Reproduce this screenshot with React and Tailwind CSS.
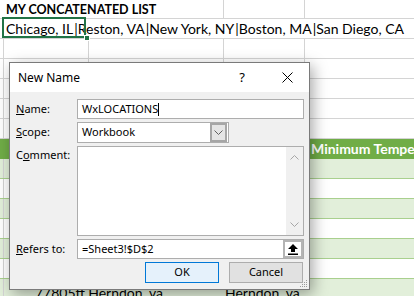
export default function App() {
  const g = "border-[#d4d4d4]";
  const dataRows = [0, 1, 2, 3, 4, 5, 6];
  const P = () => <span className="ml-[1px]">|</span>;
  return (
    <div className="relative w-[414px] h-[296px] overflow-hidden bg-white font-['Lato',sans-serif] text-black">
      {/* Row 1 */}
      <div className={`flex h-[19px] border-b ${g}`}>
        <div className={`w-[224px] shrink-0 border-r ${g} pl-[6px] font-bold text-[12.5px] leading-[19px] whitespace-nowrap`}>
          MY CONCATENATED LIST
        </div>
        <div className={`w-[81px] shrink-0 border-r ${g}`} />
        <div className="flex-1" />
      </div>
      {/* Row 2 */}
      <div className={`relative h-[20px] border-b ${g} pl-[6px] whitespace-nowrap text-[14px] leading-[20px]`}>
        Chicago, IL<P />Reston, VA<P />New York, NY<P />Boston, MA<P />San Diego, CA
        <div className="absolute left-[2px] top-[-2px] w-[84px] h-[21px] border-2 border-[#217346]" />
        <div className="absolute left-[84px] top-[16px] w-[6px] h-[6px] bg-[#217346] border border-white" />
      </div>
      {/* Rows 3-7 */}
      {[0, 1, 2, 3, 4].map((i) => (
        <div key={i} className={`flex h-[20px] border-b ${g}`}>
          <div className={`w-[4px] shrink-0 border-r ${g}`} />
          <div className={`w-[85px] shrink-0 border-r ${g}`} />
          <div className={`w-[135px] shrink-0 border-r ${g}`} />
          <div className={`w-[81px] shrink-0 border-r ${g}`} />
          <div className="flex-1" />
        </div>
      ))}
      {/* Table header */}
      <div className="flex h-[20px] bg-[#70ad47] overflow-hidden">
        <div className="w-[308px] shrink-0" />
        <div className="shrink-0 pl-[3px] text-white font-bold text-[14px] leading-[20px] whitespace-nowrap">
          Minimum Temperature
        </div>
      </div>
      {/* Table rows */}
      {dataRows.map((i) => (
        <div
          key={i}
          className={`flex h-[20px] border-b border-[#a9d08e] ${i % 2 === 0 ? "bg-[#e2efda]" : "bg-white"}`}
        >
          <div className={`w-[4px] shrink-0 border-r ${g}`} />
          {i === 6 ? (
            <div className="flex text-[14px] leading-[27px] whitespace-nowrap">
              <span className="shrink-0 pl-[31px] w-[221px]">77805ff Herndon, va</span>
              <span className="shrink-0">Herndon, va</span>
            </div>
          ) : null}
        </div>
      ))}

      {/* Dialog */}
      <div className="absolute left-[9px] top-[62px] w-[301px] h-[228px] border border-[#7a7a7a] bg-[#f0f0f0] shadow-[3px_4px_14px_rgba(0,0,0,0.35)] flex flex-col font-['Noto_Sans',sans-serif] text-[11px] text-black">
        {/* Title bar */}
        <div className="h-[29px] bg-white flex items-center pl-[8px] pr-[12px]">
          <span className="flex-1 text-[12px]">New Name</span>
          <span className="w-[20px] text-center text-[13px]">?</span>
          <span className="w-[25px]" />
          <span className="w-[20px] flex items-center justify-center">
            <svg width="11" height="11" viewBox="0 0 11 11">
              <path d="M0.5 0.5 L10.5 10.5 M10.5 0.5 L0.5 10.5" stroke="#000" strokeWidth="1" fill="none" />
            </svg>
          </span>
        </div>
        {/* Body */}
        <div className="relative flex-1 pt-[7px] pl-[6px] pr-[5px]">
          <div className="grid grid-cols-[61px_1fr] gap-y-[3px]">
            <div className="flex items-center h-[20px]">
              <span><span className="underline">N</span>ame:</span>
            </div>
            <div className="h-[20px] bg-white border border-[#adadad] flex items-center pl-[4px]">
              <span>WxLOCATIONS</span>
              <span className="w-[1px] h-[13px] bg-black" />
            </div>

            <div className="flex items-center h-[21px]">
              <span><span className="underline">S</span>cope:</span>
            </div>
            <div className="w-[152px] h-[21px] bg-white border border-[#adadad] flex items-center pl-[4px] pr-[1px]">
              <span className="flex-1">Workbook</span>
              <span className="w-[17px] h-[19px] bg-[#e5e5e5] border-2 border-[#a6a6a6] flex items-center justify-center">
                <svg width="9" height="5" viewBox="0 0 9 5">
                  <path d="M0.5 0.5 L4.5 4.5 L8.5 0.5" stroke="#606060" strokeWidth="1" fill="none" />
                </svg>
              </span>
            </div>

            <div className="h-[90px] pt-[1px]">
              <span>C<span className="underline">o</span>mment:</span>
            </div>
            <div className="h-[90px] bg-white border border-[#adadad] flex justify-end">
              <div className="w-[17px] h-full bg-[#f0f0f0] flex flex-col items-center justify-between py-[8px]">
                <svg width="9" height="5" viewBox="0 0 9 5">
                  <path d="M0.5 4.5 L4.5 0.5 L8.5 4.5" stroke="#a6a6a6" strokeWidth="1" fill="none" />
                </svg>
                <svg width="9" height="5" viewBox="0 0 9 5">
                  <path d="M0.5 0.5 L4.5 4.5 L8.5 0.5" stroke="#a6a6a6" strokeWidth="1" fill="none" />
                </svg>
              </div>
            </div>

            <div className="flex items-center h-[20px]">
              <span><span className="underline">R</span>efers to:</span>
            </div>
            <div className="h-[20px] bg-white border border-[#adadad] flex items-center pl-[4px]">
              <span className="flex-1">=Sheet3!$D$2</span>
              <span className="w-[20px] h-[18px] bg-white border-2 border-[#b4b4b4] flex items-center justify-center">
                <svg width="12" height="12" viewBox="0 0 12 12">
                  <polygon points="6,1 11,6 8,6 8,9 4,9 4,6 1,6" fill="#000" />
                  <rect x="1" y="10.5" width="10" height="1.5" fill="#000" />
                </svg>
              </span>
            </div>

            <div className="col-span-2 flex justify-end gap-[10px] pr-[1px]">
              <div className="w-[74px] h-[21px] bg-[#e5f1fb] border border-[#0078d7] flex items-center justify-center">
                OK
              </div>
              <div className="w-[74px] h-[21px] bg-[#e1e1e1] border border-[#adadad] flex items-center justify-center">
                Cancel
              </div>
            </div>
          </div>
          {/* Resize grip */}
          <svg className="absolute right-[1px] bottom-[1px]" width="10" height="10" viewBox="0 0 10 10">
            <rect x="8" y="2" width="1" height="1" fill="#9a9a9a" />
            <rect x="6" y="4" width="1" height="1" fill="#9a9a9a" />
            <rect x="8" y="4" width="1" height="1" fill="#9a9a9a" />
            <rect x="4" y="6" width="1" height="1" fill="#9a9a9a" />
            <rect x="6" y="6" width="1" height="1" fill="#9a9a9a" />
            <rect x="8" y="6" width="1" height="1" fill="#9a9a9a" />
            <rect x="2" y="8" width="1" height="1" fill="#9a9a9a" />
            <rect x="4" y="8" width="1" height="1" fill="#9a9a9a" />
            <rect x="6" y="8" width="1" height="1" fill="#9a9a9a" />
            <rect x="8" y="8" width="1" height="1" fill="#9a9a9a" />
          </svg>
        </div>
      </div>
    </div>
  );
}
